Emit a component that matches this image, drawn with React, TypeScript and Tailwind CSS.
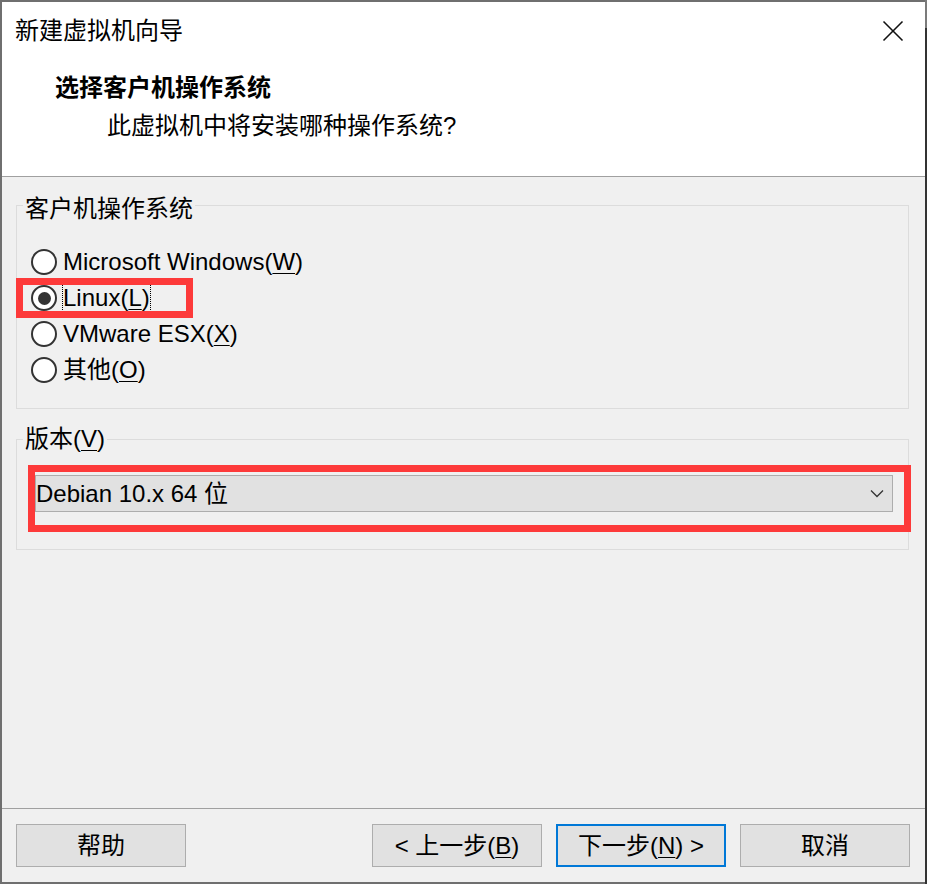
import React from "react";

const FONT = { fontFamily: '"Liberation Sans", "Noto Sans CJK SC", sans-serif' };

function U({ children }: { children: React.ReactNode }) {
  return <span className="underline underline-offset-[3px] decoration-1">{children}</span>;
}

function Radio({ checked, children, focus }: { checked?: boolean; children: React.ReactNode; focus?: boolean }) {
  return (
    <div className="relative flex h-[36px] items-center">
      <div className="ml-[14px] flex h-[26px] w-[26px] items-center justify-center rounded-full border-2 border-[#333333] bg-white">
        {checked && <div className="h-[13px] w-[13px] rounded-full bg-[#333333]" />}
      </div>
      <span
        className={
          "ml-[5px] flex h-[28px] items-center border text-[24px] leading-[28px] text-black " +
          (focus ? "border-dotted border-black" : "border-transparent")
        }
      >
        {children}
      </span>
    </div>
  );
}

function Button({ children, primary }: { children: React.ReactNode; primary?: boolean }) {
  return (
    <div
      className={
        "flex h-[43px] w-[170px] items-center justify-center bg-[#e1e1e1] text-[24px] leading-[30px] text-black " +
        (primary ? "border-2 border-[#0078d7]" : "border border-[#adadad]")
      }
    >
      {children}
    </div>
  );
}

export default function App() {
  return (
    <div className="flex h-[884px] w-[927px] bg-[#f0f0f0]" style={FONT}>
      <div className="flex h-[884px] w-[925px] flex-col border-b-2 border-l-2 border-t-2 border-[#6f6f6f]">
        {/* title bar */}
        <div className="flex h-[58px] items-center bg-white">
          <span className="pl-[13px] text-[24px] leading-[30px] text-black">新建虚拟机向导</span>
          <div className="flex-1" />
          <svg width="22" height="22" viewBox="0 0 22 22" className="mr-[21px]">
            <line x1="1.5" y1="1.5" x2="20.5" y2="20.5" stroke="#111" strokeWidth="1.6" />
            <line x1="20.5" y1="1.5" x2="1.5" y2="20.5" stroke="#111" strokeWidth="1.6" />
          </svg>
        </div>
        {/* header */}
        <div className="flex h-[116px] flex-col bg-white pt-[13px]">
          <div className="pl-[53px] text-[24px] font-bold leading-[30px] text-black">选择客户机操作系统</div>
          <div className="mt-[8px] pl-[105px] text-[24px] leading-[30px] text-black">此虚拟机中将安装哪种操作系统?</div>
        </div>
        <div className="h-px bg-[#a0a0a0]" />
        {/* body */}
        <div className="flex flex-1 flex-col">
          <div className="relative ml-[14px] mt-[28px] h-[204px] w-[893px] border border-[#dcdcdc] pt-[38px]">
            <span className="absolute -top-[12px] left-[6px] bg-[#f0f0f0] px-[2px] text-[24px] leading-[30px] text-black">
              客户机操作系统
            </span>
            <Radio>
              Microsoft Windows(<U>W</U>)
            </Radio>
            <div className="relative">
              <Radio checked focus>
                Linux(<U>L</U>)
              </Radio>
              <div className="pointer-events-none absolute -left-[1px] -top-[2px] h-[40px] w-[177px] border-[7px] border-[#fd3a3a]" />
            </div>
            <Radio>
              VMware ESX(<U>X</U>)
            </Radio>
            <Radio>
              其他(<U>O</U>)
            </Radio>
          </div>

          <div className="relative ml-[14px] mt-[30px] h-[111px] w-[893px] border border-[#dcdcdc] pl-[18px] pt-[35px]">
            <span className="absolute -top-[16px] left-[6px] bg-[#f0f0f0] px-[2px] text-[24px] leading-[30px] text-black">
              版本(<U>V</U>)
            </span>
            <div className="relative">
              <div className="flex h-[37px] w-[858px] items-center border border-[#adadad] bg-[#e1e1e1] pl-[0px]">
                <span className="text-[24px] leading-[30px] text-black">Debian 10.x 64 位</span>
                <div className="flex-1" />
                <svg width="14" height="9" viewBox="0 0 14 9" className="mr-[8px]">
                  <polyline points="1,1.5 7,7.5 13,1.5" fill="none" stroke="#333" strokeWidth="1.3" />
                </svg>
              </div>
              <div className="pointer-events-none absolute -left-[7px] -top-[10px] h-[67px] w-[883px] border-[7px] border-[#fd3a3a]" />
            </div>
          </div>
        </div>
        <div className="h-px bg-[#a0a0a0]" />
        {/* footer */}
        <div className="flex h-[73px] pt-[15px]">
          <div className="ml-[14px]">
            <Button>帮助</Button>
          </div>
          <div className="flex-1" />
          <Button>
            &lt; 上一步(<U>B</U>)
          </Button>
          <div className="ml-[14px]">
            <Button primary>
              下一步(<U>N</U>) &gt;
            </Button>
          </div>
          <div className="ml-[14px] mr-[15px]">
            <Button>取消</Button>
          </div>
        </div>
      </div>
      <div className="flex h-[884px] w-[2px] flex-col">
        <div className="h-[28px] bg-[#7b7b7b]" />
        <div className="flex-1 bg-[#333333]" />
      </div>
    </div>
  );
}
